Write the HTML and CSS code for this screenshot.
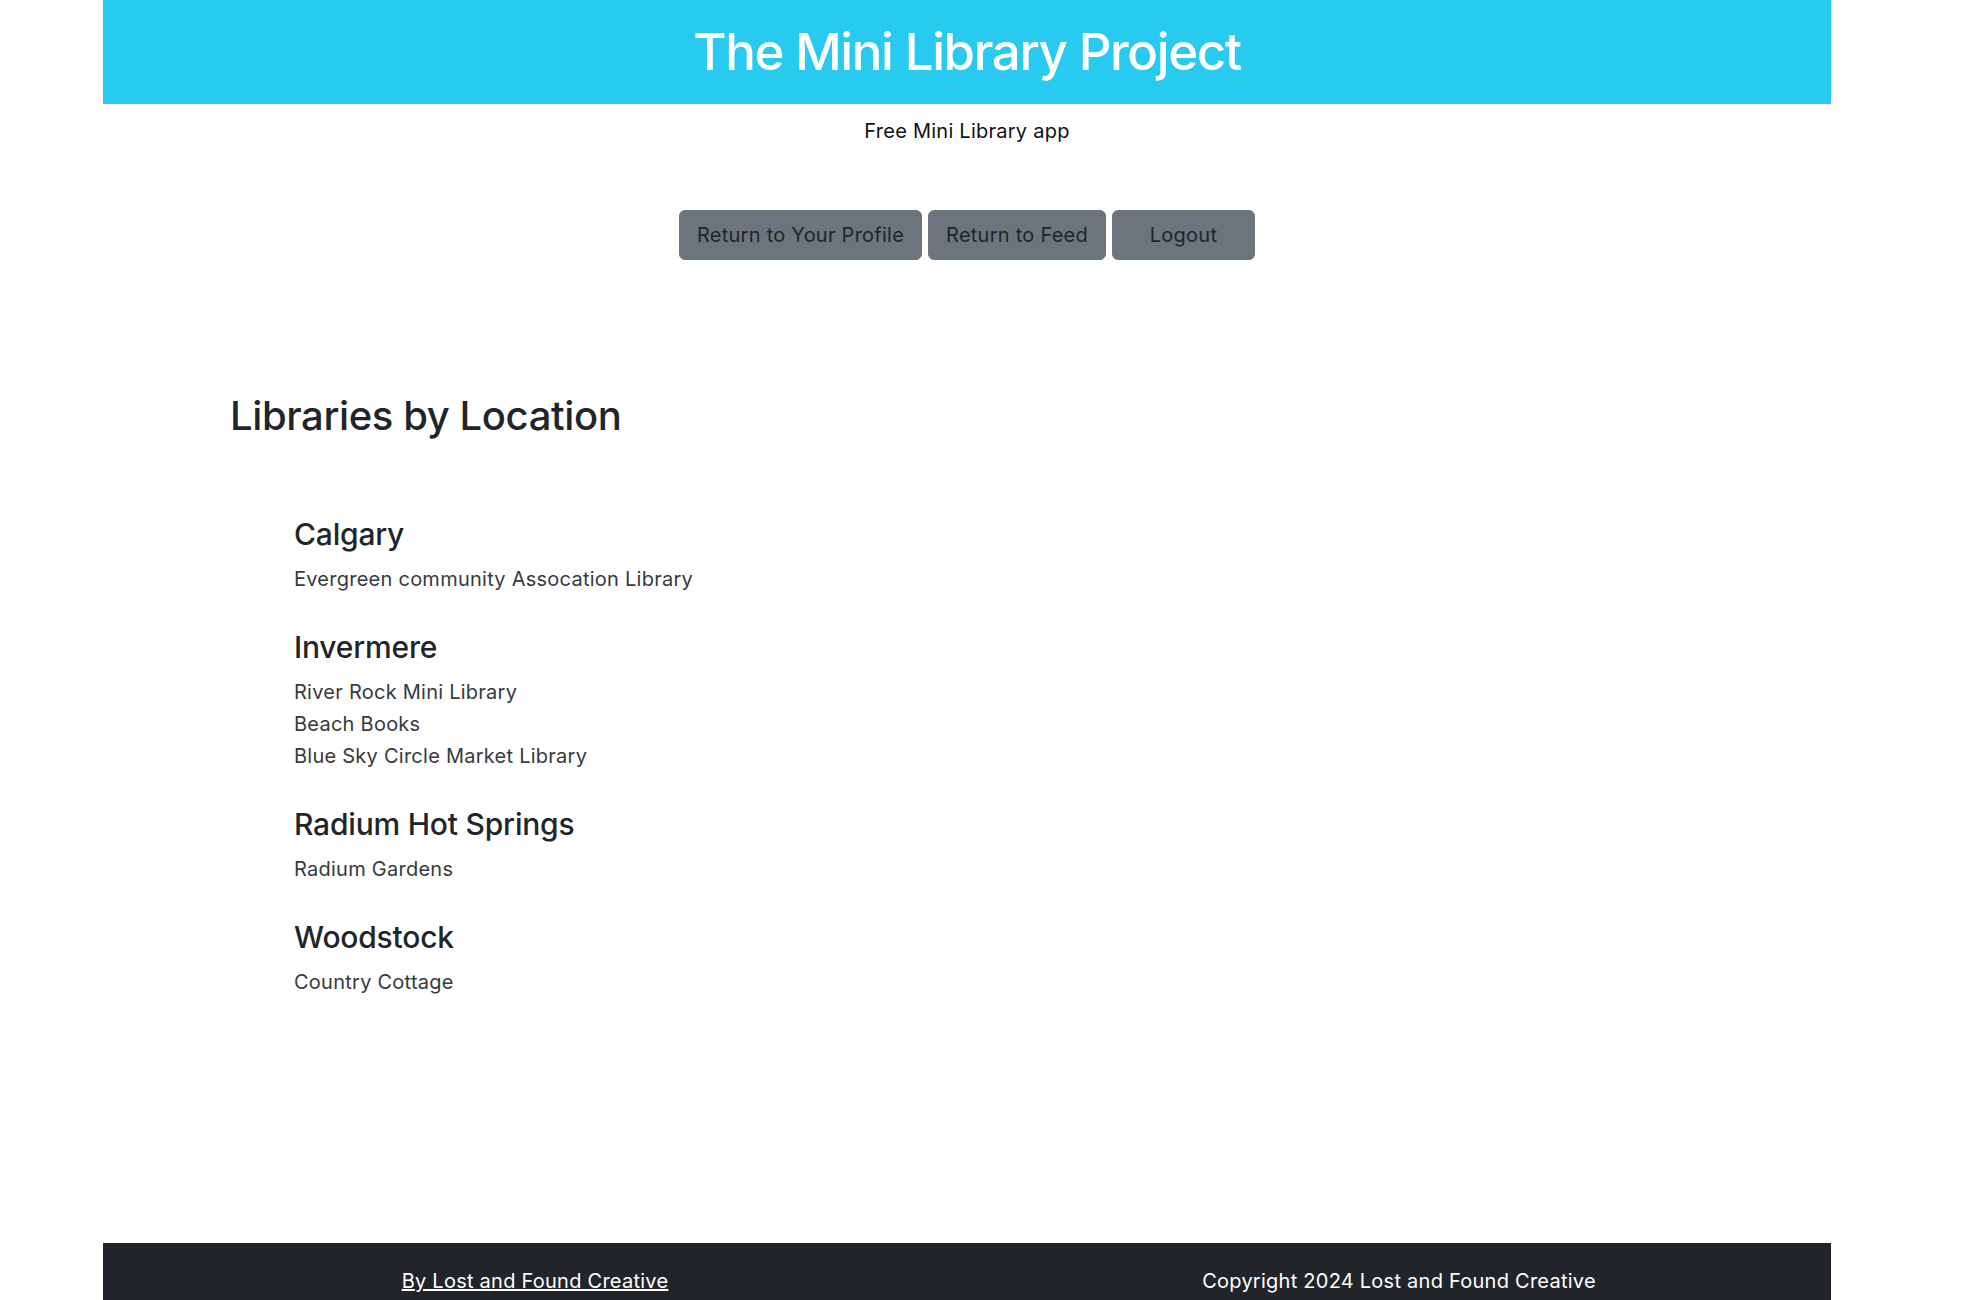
FILE: index.html
```html
<!DOCTYPE html>
<html lang="en">
<head>
<meta charset="utf-8">
<title>The Mini Library Project</title>
<link rel="stylesheet" href="styles.css">
</head>
<body>
<div class="page">
  <header class="hero">
    <h1 class="hero-title">The Mini Library Project</h1>
  </header>
  <p class="tagline">Free Mini Library app</p>
  <nav class="actions">
    <a class="btn" href="#">Return to Your Profile</a>
    <a class="btn" href="#">Return to Feed</a>
    <button class="btn btn-logout" type="button">Logout</button>
  </nav>
  <main class="content">
    <h2 class="section-title">Libraries by Location</h2>
    <div class="locations">
      <section class="location">
        <h4 class="location-name">Calgary</h4>
        <ul class="library-list">
          <li>Evergreen community Assocation Library</li>
        </ul>
      </section>
      <section class="location">
        <h4 class="location-name">Invermere</h4>
        <ul class="library-list">
          <li>River Rock Mini Library</li>
          <li>Beach Books</li>
          <li>Blue Sky Circle Market Library</li>
        </ul>
      </section>
      <section class="location">
        <h4 class="location-name">Radium Hot Springs</h4>
        <ul class="library-list">
          <li>Radium Gardens</li>
        </ul>
      </section>
      <section class="location">
        <h4 class="location-name">Woodstock</h4>
        <ul class="library-list">
          <li>Country Cottage</li>
        </ul>
      </section>
    </div>
  </main>
  <footer class="site-footer">
    <div class="footer-col"><a class="footer-link" href="#">By Lost and Found Creative</a></div>
    <div class="footer-col">Copyright 2024 Lost and Found Creative</div>
  </footer>
</div>
</body>
</html>
```
FILE: styles.css
```css
* { box-sizing: border-box; }
html, body { margin: 0; padding: 0; background: #fff; }
body {
  font-family: Inter, "Noto Sans", "Liberation Sans", sans-serif;
  font-size: 20px;
  line-height: 1.5;
  letter-spacing: 0.25px;
  color: #212529;
}
.page {
  width: 1728px;
  margin-left: 103px;
}
.hero {
  background: #29caef;
  height: 104px;
  display: flex;
  align-items: center;
  justify-content: center;
}
.hero-title {
  margin: 0;
  color: #fff;
  font-size: 51px;
  font-weight: 500;
  line-height: 1.2;
  letter-spacing: -1.4px;
}
.tagline {
  margin: 12px 0 0;
  text-align: center;
  line-height: 30px;
  color: #111;
}
.actions {
  margin-top: 64px;
  display: flex;
  justify-content: center;
  gap: 6px;
}
.btn {
  display: inline-flex;
  align-items: center;
  justify-content: center;
  height: 50px;
  padding: 0 17px;
  background: #6c757d;
  border: 1px solid #6c757d;
  border-radius: 6px;
  color: #212529;
  font-family: inherit;
  font-size: 20px;
  letter-spacing: 0.25px;
  text-decoration: none;
  cursor: pointer;
}
.btn-logout { width: 143px; }
.content {
  padding-left: 127px;
  margin-top: 132px;
  padding-bottom: 245px;
}
.section-title {
  margin: 0;
  font-size: 40px;
  font-weight: 500;
  line-height: 48px;
  letter-spacing: -0.4px;
}
.locations {
  margin-top: 76px;
  padding-left: 64px;
  display: flex;
  flex-direction: column;
  gap: 34px;
}
.location-name {
  margin: 0 0 11px;
  font-size: 30px;
  font-weight: 500;
  line-height: 36px;
  letter-spacing: -0.2px;
}
.library-list {
  list-style: none;
  margin: 0;
  padding: 0;
  color: #373a3d;
  line-height: 32px;
}
.site-footer {
  background: #212529;
  color: #fff;
  display: grid;
  grid-template-columns: 1fr 1fr;
  padding: 23px 0 20px;
  line-height: 30px;
}
.footer-col { text-align: center; }
.footer-link { color: #fff; text-decoration: underline; }
```
